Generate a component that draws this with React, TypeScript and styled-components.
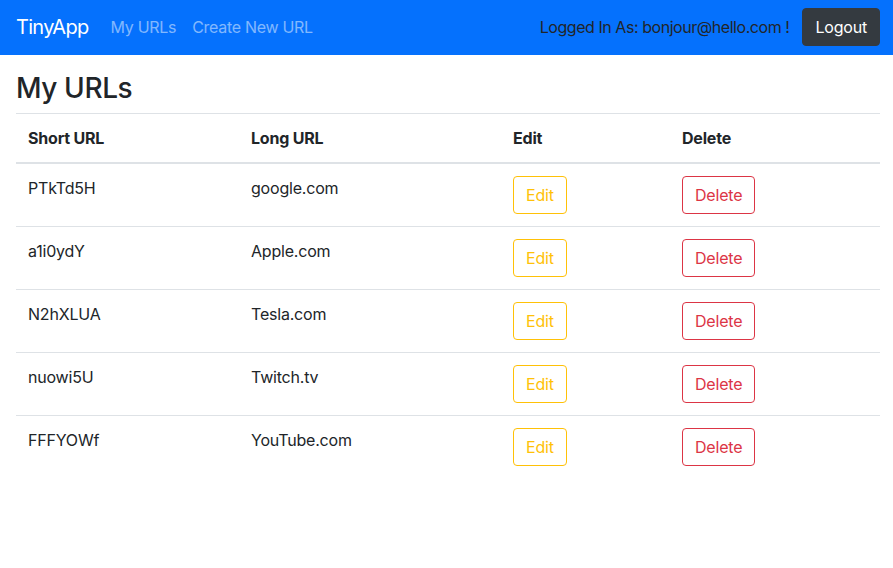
import React from "react";
import styled, { createGlobalStyle } from "styled-components";

const Global = createGlobalStyle`
  * { box-sizing: border-box; }
  body {
    margin: 0;
    font-family: Inter, "Helvetica Neue", Arial, "Noto Sans", sans-serif;
    font-size: 16px;
    line-height: 1.5;
    color: #212529;
    background: #fff;
  }
`;

const Nav = styled.nav`
  display: flex;
  align-items: center;
  height: 55px;
  padding: 7px 13px 9px 16px;
  background: #0571fd;
`;

const Brand = styled.a`
  font-size: 20px;
  line-height: 30px;
  color: #fff;
  margin-right: 14px;
  text-decoration: none;
  letter-spacing: -0.7px;
`;

const NavLink = styled.a`
  color: rgba(255, 255, 255, 0.5);
  padding: 8px 8px;
  text-decoration: none;
  letter-spacing: -0.3px;
`;

const Spacer = styled.div`
  flex: 1;
`;

const LoggedIn = styled.span`
  color: #212529;
  margin-right: 13px;
  letter-spacing: -0.45px;
`;

const DarkButton = styled.button`
  font: inherit;
  background: #343a40;
  color: #fff;
  border: 1px solid #343a40;
  border-radius: 4px;
  padding: 6px 12px;
  line-height: 24px;
  height: 38px;
  margin-top: 1px;
  letter-spacing: -0.2px;
`;

const Main = styled.main`
  padding: 17px 13px 0 16px;
`;

const Title = styled.h3`
  margin: 0 0 7px;
  font-size: 28px;
  font-weight: 500;
  line-height: 1.2;
  letter-spacing: -0.4px;
`;

const Table = styled.table`
  width: 100%;
  border-collapse: collapse;
`;

const Th = styled.th<{ $w: number }>`
  width: ${(p) => p.$w}px;
  text-align: left;
  font-weight: 700;
  padding: 12px;
  vertical-align: bottom;
  border-top: 1px solid #dee2e6;
  border-bottom: 2px solid #dee2e6;
  letter-spacing: -0.2px;
`;

const Td = styled.td`
  padding: 12px;
  vertical-align: top;
  border-top: 1px solid #dee2e6;
  letter-spacing: -0.2px;
`;

const OutlineButton = styled.button<{ $color: string }>`
  font: inherit;
  background: transparent;
  color: ${(p) => p.$color};
  border: 1px solid ${(p) => p.$color};
  border-radius: 4px;
  padding: 6px 12px;
  line-height: 24px;
  height: 38px;
  letter-spacing: -0.2px;
`;

const urls = [
  ["PTkTd5H", "google.com"],
  ["a1i0ydY", "Apple.com"],
  ["N2hXLUA", "Tesla.com"],
  ["nuowi5U", "Twitch.tv"],
  ["FFFYOWf", "YouTube.com"],
];

export default function App() {
  return (
    <>
      <Global />
      <Nav>
        <Brand>TinyApp</Brand>
        <NavLink>My URLs</NavLink>
        <NavLink>Create New URL</NavLink>
        <Spacer />
        <LoggedIn>Logged In As: bonjour@hello.com !</LoggedIn>
        <DarkButton>Logout</DarkButton>
      </Nav>
      <Main>
        <Title>My URLs</Title>
        <Table>
          <thead>
            <tr>
              <Th $w={223}>Short URL</Th>
              <Th $w={262}>Long URL</Th>
              <Th $w={169}>Edit</Th>
              <Th $w={210}>Delete</Th>
            </tr>
          </thead>
          <tbody>
            {urls.map(([s, l]) => (
              <tr key={s}>
                <Td>{s}</Td>
                <Td>{l}</Td>
                <Td>
                  <OutlineButton $color="#ffc107">Edit</OutlineButton>
                </Td>
                <Td>
                  <OutlineButton $color="#dc3545">Delete</OutlineButton>
                </Td>
              </tr>
            ))}
          </tbody>
        </Table>
      </Main>
    </>
  );
}
